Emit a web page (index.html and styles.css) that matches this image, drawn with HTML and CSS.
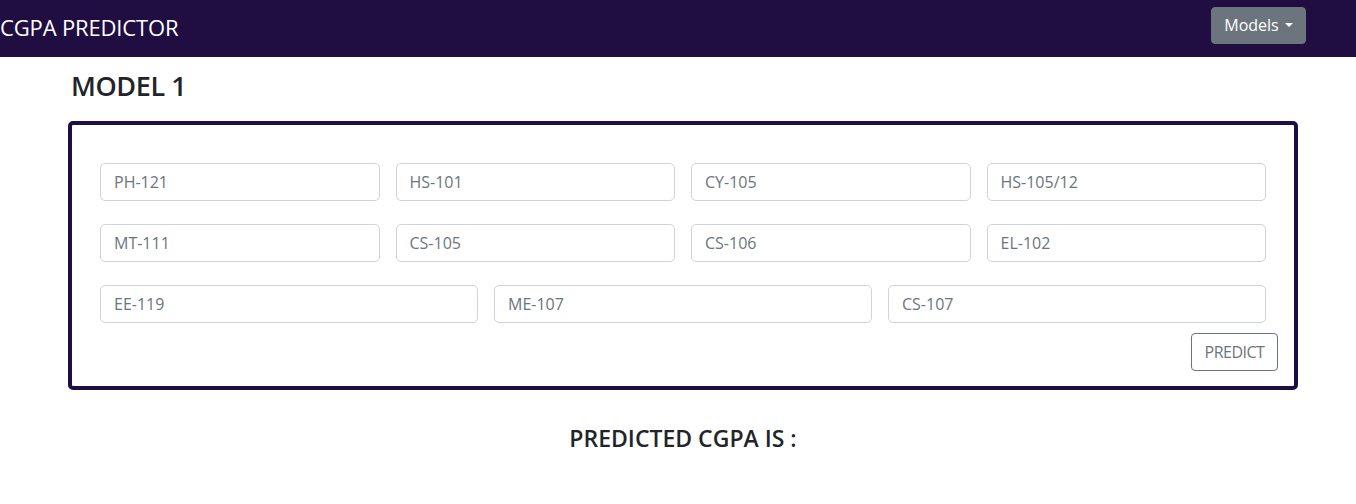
FILE: index.html
```html
<!DOCTYPE html>
<html>
<head>
<meta charset="utf-8">
<link rel="stylesheet" href="styles.css">
</head>
<body>
<nav class="navbar">
  <span class="brand">CGPA PREDICTOR</span>
  <button class="models-btn">Models <span class="caret"></span></button>
</nav>
<main class="container">
  <h2 class="title">MODEL 1</h2>
  <form class="card">
    <div class="row four">
      <input class="field" placeholder="PH-121">
      <input class="field" placeholder="HS-101">
      <input class="field" placeholder="CY-105">
      <input class="field" placeholder="HS-105/12">
    </div>
    <div class="row four">
      <input class="field" placeholder="MT-111">
      <input class="field" placeholder="CS-105">
      <input class="field" placeholder="CS-106">
      <input class="field" placeholder="EL-102">
    </div>
    <div class="row three">
      <input class="field" placeholder="EE-119">
      <input class="field" placeholder="ME-107">
      <input class="field" placeholder="CS-107">
    </div>
    <div class="actions">
      <button type="button" class="predict-btn">PREDICT</button>
    </div>
  </form>
  <h3 class="result">PREDICTED CGPA IS :</h3>
</main>
</body>
</html>
```

FILE: styles.css
```css
* { box-sizing: border-box; }
body {
  margin: 0;
  font-family: "Open Sans", "Noto Sans", sans-serif;
  color: #212529;
  background: #fff;
}
.navbar {
  height: 57px;
  background: #200e43;
  display: flex;
  align-items: center;
  justify-content: space-between;
  padding: 0 50px 0 0;
}
.brand {
  color: #fff;
  font-size: 22px;
  letter-spacing: -0.15px;
  margin-top: -3px;
}
.models-btn {
  font-family: inherit;
  height: 37px;
  width: 95px;
  margin-top: -7px;
  background: #6c757d;
  color: #fff;
  border: 1px solid #6c757d;
  border-radius: 4px;
  font-size: 16px;
  display: flex;
  align-items: center;
  justify-content: center;
  gap: 6px;
  padding: 0;
}
.caret {
  width: 0;
  height: 0;
  border-left: 4px solid transparent;
  border-right: 4px solid transparent;
  border-top: 4.5px solid #fff;
}
.container {
  width: 1230px;
  margin-left: 68px;
}
.title {
  margin: 13px 0 0 3px;
  font-size: 27px;
  font-weight: 600;
  line-height: 32px;
  letter-spacing: -0.4px;
}
.card {
  margin-top: 19px;
  border: 4px solid #200e43;
  border-radius: 5px;
  padding: 38px 16px 15px 28px;
  display: flex;
  flex-direction: column;
}
.row {
  display: grid;
  gap: 16px;
  width: 1166px;
  margin-bottom: 23px;
}
.row.four { grid-template-columns: repeat(4, 1fr); }
.row.three { grid-template-columns: repeat(3, 1fr); margin-bottom: 10px; }
.field {
  height: 38px;
  border: 1px solid #ced4da;
  border-radius: 5px;
  padding: 0 13px;
  font-family: inherit;
  font-size: 16px;
  color: #495057;
}
.field::placeholder { color: #6c757d; }
.actions {
  display: flex;
  justify-content: flex-end;
}
.predict-btn {
  width: 87px;
  height: 38px;
  background: #fff;
  border: 1px solid #6c757d;
  border-radius: 4px;
  color: #6c757d;
  font-family: inherit;
  font-size: 16px;
  padding: 0;
  letter-spacing: -0.5px;
}
.result {
  text-align: center;
  margin: 34px 0 0;
  font-size: 23px;
  font-weight: 600;
  line-height: 28px;
}
```
